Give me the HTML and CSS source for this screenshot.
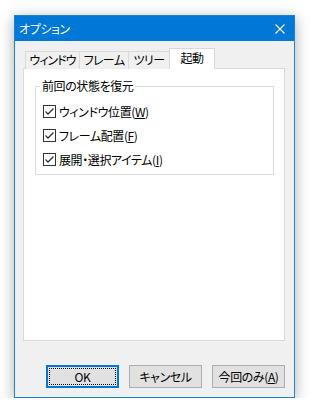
FILE: index.html
```html
<!DOCTYPE html>
<html lang="ja">
<head>
    <meta charset="UTF-8">
    <meta name="viewport" content="width=device-width, initial-scale=1.0">
    <title>オプション</title>
    <link rel="stylesheet" href="styles.css">
</head>
<body>
<div class="window">
    <div class="titlebar">
        <span class="title">オプション</span>
        <svg class="close" width="10" height="10" viewBox="0 0 10 10">
            <path d="M0.5 0.5 L9.5 9.5 M9.5 0.5 L0.5 9.5" stroke="#fff" stroke-width="1.1" fill="none"/>
        </svg>
    </div>

    <div class="content">
        <div class="tabs">
            <div class="tab tab-window">ウィンドウ</div>
            <div class="tab tab-frame">フレーム</div>
            <div class="tab tab-tree">ツリー</div>
            <div class="tab tab-start selected">起動</div>
        </div>

        <div class="panel">
            <fieldset class="group">
                <legend>前回の状態を復元</legend>
                <label class="check">
                    <svg class="box" width="13" height="13" viewBox="0 0 13 13">
                        <rect x="0.5" y="0.5" width="12" height="12" fill="#fff" stroke="#333"/>
                        <path d="M2.5 6.5 L5 9 L10.5 3.5" stroke="#333" stroke-width="1.3" fill="none"/>
                    </svg>
                    <span>ウィンドウ位置(<u>W</u>)</span>
                </label>
                <label class="check">
                    <svg class="box" width="13" height="13" viewBox="0 0 13 13">
                        <rect x="0.5" y="0.5" width="12" height="12" fill="#fff" stroke="#333"/>
                        <path d="M2.5 6.5 L5 9 L10.5 3.5" stroke="#333" stroke-width="1.3" fill="none"/>
                    </svg>
                    <span>フレーム配置(<u>F</u>)</span>
                </label>
                <label class="check">
                    <svg class="box" width="13" height="13" viewBox="0 0 13 13">
                        <rect x="0.5" y="0.5" width="12" height="12" fill="#fff" stroke="#333"/>
                        <path d="M2.5 6.5 L5 9 L10.5 3.5" stroke="#333" stroke-width="1.3" fill="none"/>
                    </svg>
                    <span>展開・選択アイテム(<u>I</u>)</span>
                </label>
            </fieldset>
        </div>

        <div class="buttons">
            <button class="btn default"><span class="focus">OK</span></button>
            <button class="btn">キャンセル</button>
            <button class="btn">今回のみ(<u>A</u>)</button>
        </div>
    </div>
</div>
</body>
</html>
```

FILE: styles.css
```css
body {
    margin: 0;
    background-color: #ffffff;
    font-family: "Noto Sans CJK JP", "Noto Sans", sans-serif;
    font-size: 12px;
    letter-spacing: -0.4px;
    color: #000;
    font-feature-settings: "palt";
}
.window {
    box-sizing: border-box;
    width: 281px;
    height: 383px;
    margin: 15px 0 0 14px;
    border: 1px solid #1883d7;
    background-color: #f0f0f0;
    display: flex;
    flex-direction: column;
    box-shadow: 0 3px 14px rgba(0, 0, 0, 0.32);
}
.titlebar {
    height: 25px;
    background-color: #0078d7;
    color: #fff;
    display: flex;
    align-items: center;
    justify-content: space-between;
    padding: 0 9px 0 4px;
    flex-shrink: 0;
}
.title {
    line-height: 16px;
}
.content {
    flex: 1;
    display: flex;
    flex-direction: column;
    padding: 8px 9px 9px 8px;
}
.tabs {
    display: flex;
    align-items: flex-end;
    height: 20px;
    padding-left: 2px;
    margin-bottom: -1px;
    position: relative;
    z-index: 1;
}
.tab {
    box-sizing: border-box;
    height: 18px;
    border: 1px solid #d9d9d9;
    border-bottom: none;
    margin-right: -1px;
    text-align: center;
    line-height: 16px;
    background-color: #f0f0f0;
}
.tab-window { width: 55px; letter-spacing: -1px; }
.tab-frame { width: 50px; letter-spacing: -0.6px; }
.tab-tree { width: 42px; letter-spacing: -0.6px; }
.tab-start { width: 46px; }
.tab.selected {
    height: 21px;
    background-color: #fff;
    line-height: 18px;
}
.panel {
    box-sizing: border-box;
    height: 273px;
    background-color: #fff;
    border: 1px solid #d9d9d9;
    padding: 9px 10px 0 11px;
}
.group {
    margin: 0;
    border: 1px solid #dcdcdc;
    padding: 5px 0 3px 7px;
    display: flex;
    flex-direction: column;
}
.group legend {
    padding: 0 2px;
    margin-left: -3px;
    line-height: 16px;
}
.check {
    display: flex;
    align-items: center;
    height: 24px;
    gap: 3px;
}
.box {
    flex-shrink: 0;
}
.buttons {
    display: flex;
    justify-content: flex-end;
    gap: 10px;
    margin-top: auto;
}
.btn {
    box-sizing: border-box;
    width: 73px;
    height: 23px;
    padding: 0;
    font: inherit;
    letter-spacing: inherit;
    color: #000;
    background-color: #e1e1e1;
    border: 1px solid #adadad;
}
.btn.default {
    border: 2px solid #0078d7;
    padding: 1px;
}
.focus {
    display: block;
    height: 100%;
    box-sizing: border-box;
    border: 1px dotted #000;
    line-height: 15px;
}
```
